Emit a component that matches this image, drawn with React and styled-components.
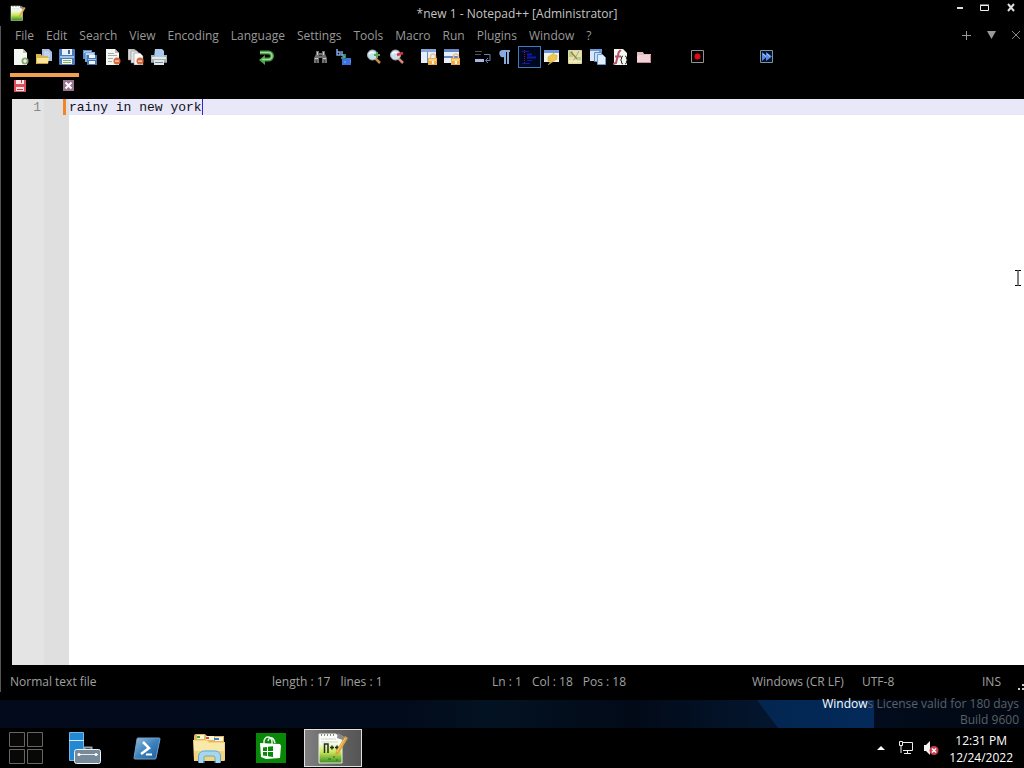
import React, { useState } from "react"
import styled, { createGlobalStyle } from "styled-components"

const menus = ["File", "Edit", "Search", "View", "Encoding", "Language", "Settings", "Tools", "Macro", "Run", "Plugins", "Window", "?"]

const toolGroups = [
    { gap: 0, tools: ["New", "Open", "Save", "Save All", "Close", "Close All", "Print"] },
    { gap: 84, tools: ["Redo"] },
    { gap: 31, tools: ["Find", "Replace"] },
    { gap: 8, tools: ["Zoom In", "Zoom Out"] },
    { gap: 9, tools: ["Sync Vertical", "Sync Horizontal"] },
    { gap: 8, tools: ["Word Wrap", "All Characters", "Indent Guide", "Define Language", "Document Map", "Document List", "Function List", "Folder"] },
    { gap: 30, tools: ["Record"] },
    { gap: 46, tools: ["Run Macro"] },
]

const page = <path d="M1 0h9l4 4v12H1z" fill="#f3f6f1" />
const lock = (
    <>
        <path d="M9.500 9V7.500a2.500 2.500 0 0 1 5 0V9" fill="none" stroke="#e9c48a" strokeWidth="1.500" />
        <rect x="7" y="9" width="9" height="7" fill="#f0ad50" />
        <path d="M8 10h7v2H8z" fill="#fbd28a" />
        <path d="M11 12h2v3h-2z" fill="#fff0c8" />
    </>
)
const minus = (
    <>
        <circle cx="12" cy="12" r="3.500" fill="#d8683a" />
        <path d="M10 11.500h4v1.200h-4z" fill="#ffe3d2" />
    </>
)

const drawings = {
    "New": (
        <>
            {page}
            <path d="M10 0l4 4h-4z" fill="#b9c4b6" />
            <circle cx="12" cy="12" r="3.500" fill="#8aa872" />
            <path d="M11.400 10h1.200v1.400H14v1.200h-1.400V14h-1.200v-1.400H10v-1.200h1.400z" fill="#fff" />
        </>
    ),
    "Open": (
        <>
            <path d="M6 0h7l3 3v9H6z" fill="#a9bfe4" />
            <path d="M8 3h5M8 5h6M8 7h6" stroke="#dbe5f6" />
            <path d="M0 5h5l1 2h6v8H0z" fill="#d9b650" />
            <path d="M1 9h12l-1 6H1z" fill="#f8e59a" />
            <path d="M1 14.500h11" stroke="#c79a32" />
        </>
    ),
    "Save": (
        <>
            <rect width="16" height="16" rx="1" fill="#4c7cc0" />
            <rect x="3" width="10" height="6" fill="#e9f1fa" />
            <rect x="9" y="1" width="2" height="4" fill="#47699c" />
            <path d="M1 7h14v2H1z" fill="#9fc0e8" />
            <rect x="3" y="10" width="10" height="5" fill="#f4f9f0" />
            <path d="M4 11.500h8M4 13.500h8" stroke="#83b56b" />
        </>
    ),
    "Save All": (
        <>
            <path d="M1 1h9v9H1z" fill="#5c8cc4" />
            <path d="M2 2h7v2H2z" fill="#a8c8ea" />
            <path d="M3 3h10v10H3z" fill="#7ba5d6" />
            <path d="M4 4h8v2H4z" fill="#bcd5ee" />
            <path d="M5 6h10v10H5z" fill="#4779b9" />
            <path d="M7 6h6v3H7zM7 12h6v3H7z" fill="#edf5fb" />
            <path d="M6 10h8v1H6z" fill="#9fc2e5" />
        </>
    ),
    "Close": (
        <>
            {page}
            <path d="M3 4.500h6M3 6.500h9M3 9.500h5M3 12.500h4" stroke="#a8abab" />
            <path d="M10 0l4 4h-4z" fill="#b9b9b9" />
            {minus}
        </>
    ),
    "Close All": (
        <>
            <path d="M0 0h6l3 2v9H0z" fill="#d6d6d6" stroke="#777" strokeWidth=".5" />
            <path d="M3 2h6l3 3v9H3z" fill="#e8e8e8" stroke="#777" strokeWidth=".5" />
            <path d="M6 4h6l3 3v9H6z" fill="#fafafa" stroke="#777" strokeWidth=".5" />
            {minus}
        </>
    ),
    "Print": (
        <>
            <path d="M4 0h7l2 2v6H3z" fill="#a9c9ea" />
            <path d="M0 6h3v2h10V6h3v8H0z" fill="#a7b0b5" />
            <path d="M1 8h14v2H1z" fill="#e2e7e9" />
            <path d="M3 11h10v5H3z" fill="#dce8ea" />
            <path d="M4 13.500h8M0 13.500h3M13 13.500h3" stroke="#78858b" />
        </>
    ),
    "Redo": (
        <>
            <path d="M2 3.500h8.500a3.500 3.500 0 0 1 0 7H6" fill="none" stroke="#3f9440" strokeWidth="4" />
            <path d="M7 6v10L1 11z" fill="#4da34b" />
            <path d="M2 3.500h8.500a3.500 3.500 0 0 1 0 7H4" fill="none" stroke="#a2dc94" strokeWidth="1.500" />
        </>
    ),
    "Find": (
        <>
            <path d="M4 2h3v2h3V2h3v3l2 4v5h-5V9H7v5H2V9l2-4z" fill="#707070" />
            <path d="M5 3h1v3H5zM11 3h1v3h-1zM3 9h3v1H3zM11 9h3v1h-3z" fill="#ccc" />
            <path d="M7 6h3v1H7z" fill="#333" />
            <path d="M4.500 11v3M12.500 11v3" stroke="#444" />
        </>
    ),
    "Replace": (
        <>
            <path d="M2 0v6h3V3H2M7 2v4h2" fill="none" stroke="#7ea8e0" strokeWidth="1.500" />
            <path d="M6 5l3 3M10 5v4H6" fill="none" stroke="#57a79c" strokeWidth="1.500" />
            <path d="M12 11H8v4h4zM12 9v6M16 10h-2v5h2" fill="#5f93ea" stroke="#3974dd" strokeWidth="2" />
        </>
    ),
    "Zoom In": (
        <>
            <path d="M9 9l5 5" stroke="#c98b4a" strokeWidth="2.500" />
            <circle cx="6.500" cy="6" r="5" fill="#c5e1e8" stroke="#9eb6c2" />
            <path d="M3 5q2-3 5-1" fill="none" stroke="#fff" strokeWidth="1.500" />
            <path d="M11 3v6M8 6h6" stroke="#5f9f56" strokeWidth="2" />
        </>
    ),
    "Zoom Out": (
        <>
            <path d="M9 9l5 5" stroke="#d78a72" strokeWidth="2.500" />
            <circle cx="6.500" cy="6" r="5" fill="#d3dfe8" stroke="#a5b3c2" />
            <path d="M3 5q2-3 5-1" fill="none" stroke="#fff" strokeWidth="1.500" />
            <path d="M8 6l6-2" stroke="#d6334a" strokeWidth="2.500" />
        </>
    ),
    "Sync Vertical": (
        <>
            <path d="M0 0h15v14H0z" fill="#e9effa" />
            <path d="M0 0h15v3H0z" fill="#87a5d8" />
            <path d="M6.500 3v11" stroke="#7189b5" />
            {lock}
        </>
    ),
    "Sync Horizontal": (
        <>
            <path d="M0 0h15v14H0z" fill="#e9effa" />
            <path d="M0 0h15v3H0zM0 7h15v2H0z" fill="#6788c2" />
            {lock}
        </>
    ),
    "Word Wrap": (
        <>
            <path d="M0 2.500h7M0 5.500h6" stroke="#51555c" />
            <path d="M0 10h9v3H0z" fill="#a8b5e8" />
            <path d="M9 5.500h6v6h-4M13 9l-2.500 2.500L13 14" fill="none" stroke="#6c83a8" />
        </>
    ),
    "All Characters": (
        <path d="M4 1h8v2h-1v12H9V3H8v12H6V8a3.500 3.500 0 0 1-2-7z" fill="#89abdc" />
    ),
    "Indent Guide": (
        <>
            <path d="M3.500 1v14" stroke="#8c1238" strokeDasharray="1 1" />
            <path d="M1 2.500h7M6 11.500h5M1 14.500h8" stroke="#1018a4" />
            <path d="M6 5.500h5M6 8.500h9" stroke="#1018b4" strokeWidth="2" />
        </>
    ),
    "Define Language": (
        <>
            <path d="M0 1h15v12H0z" fill="#f2f3e8" />
            <path d="M0 1h15v3H0z" fill="#6d98da" />
            <path d="M10 4L4 8v4h3l-3 4 9-6V6h-3z" fill="#eec84b" stroke="#d1a23a" strokeWidth=".5" />
        </>
    ),
    "Document Map": (
        <>
            <path d="M1.500 1.500h13v13h-13z" fill="#ecdfa0" stroke="#e2d8a5" />
            <path d="M2 2h4v6H2zM10 8h4v6h-4z" fill="#b5cf9b" />
            <path d="M12 2L8 9l-3 5" fill="none" stroke="#8cb0a6" />
            <path d="M4 3l6 7" stroke="#9a8550" strokeWidth="1.500" />
            <path d="M2 12.500h12" stroke="#f5f1c0" strokeWidth="2" />
        </>
    ),
    "Document List": (
        <>
            <path d="M0 0h12v3H0z" fill="#6d98d6" />
            <path d="M0 2h9v10H0z" fill="#d9e8f9" />
            <path d="M4.500 3.500h7v9h-7z" fill="#c8def4" stroke="#618fc4" />
            <path d="M7.500 5.500h5l3 3v7h-8z" fill="#e0edfb" stroke="#6d9bcb" />
        </>
    ),
    "Function List": (
        <>
            {page}
            <path d="M8 2q-2-1-3 4l-2 8-3 1M2 7.500h6" fill="none" stroke="#b85068" strokeWidth="2" />
            <path d="M10 7q-2 0-1.500 3l-1 1 1 1q-.5 3 1.500 3M12 7q2 0 1.500 3l1 1-1 1q.5 3-1.500 3" fill="none" stroke="#222" />
        </>
    ),
    "Folder": (
        <>
            <path d="M1 3h6l1 2h7v9H1z" fill="#e6bcc4" />
            <path d="M1 7l3-1h11v8H1z" fill="#f2d3d7" />
            <path d="M1 13.500h14M14.500 6v8" stroke="#c58d98" />
        </>
    ),
    "Record": (
        <>
            <path d="M2.500 1.500h12v12h-12z" fill="#080000" stroke="#929292" />
            <circle cx="8.500" cy="7.500" r="3" fill="#e00a16" />
        </>
    ),
    "Run Macro": (
        <>
            <path d="M2.500 1.500h12v12h-12z" fill="#03132e" stroke="#809698" />
            <path d="M4 3l5 4.500L4 12zM8 3l6 4.500L8 12z" fill="#5b87ea" />
            <path d="M5 5l3 2.500M9 5l3 2.500" stroke="#bed1ff" />
        </>
    ),
}

function ToolIcon({ name }) {
    return <svg width="16" height="16" viewBox="0 0 16 16" aria-hidden="true">{drawings[name]}</svg>
}

function NotepadIcon({ size }) {
    return (
        <svg width={size} height={size} viewBox="0 0 32 32" aria-hidden="true">
            <defs>
                <linearGradient id="sheet" x1="0" y1="0" x2="0" y2="1">
                    <stop offset="0.300" stopColor="#fafcf5" />
                    <stop offset="0.620" stopColor="#cbe75b" />
                    <stop offset="1" stopColor="#388d20" />
                </linearGradient>
            </defs>
            <path d="M2 2h17l6 5v24H2z" fill="url(#sheet)" stroke="#e6f1dc" />
            <path d="M4 3h15" stroke="#888" strokeWidth="2" strokeDasharray="1 2" />
            <path d="M4 7h15M4 10h17" stroke="#ced8cc" />
            {size > 16 && (
                <>
                    <path d="M7.500 21v-9h3.500v9M13 15.500h4M15 13.500v4M18 15.500h4M20 13.500v4" fill="none" stroke="#232d1b" strokeWidth="1.500" />
                    <path d="M11 27h3M16 25h2M19 28h2" stroke="#236d19" />
                </>
            )}
            <path d="M28 4l3 2-9 15-4 3 1-5z" fill="#dfa33d" />
            <path d="M28 6L20 20" stroke="#f5d070" />
            <path d="M21 1l7 4-2 3-6-2z" fill="#888" />
        </svg>
    )
}

function ServerIcon() {
    return (
        <svg width="34" height="34" viewBox="0 0 34 34">
            <path d="M1.500 1.500h14v28h-14z" fill="#2388d4" stroke="#77b7e7" />
            <path d="M1 9.500h15" stroke="#d4eaf8" />
            <path d="M16.500 19v-2.500h7V19" fill="none" stroke="#98a6b0" strokeWidth="2" />
            <rect x="6.500" y="18.500" width="26" height="14" rx="2" fill="#778a99" stroke="#eef2f4" />
            <path d="M10 23.500h20" stroke="#e5ebef" />
            <circle cx="11" cy="23.500" r="1.500" fill="#fff" />
            <circle cx="28" cy="23.500" r="1.500" fill="#fff" />
        </svg>
    )
}

function PowerShellIcon() {
    return (
        <svg width="30" height="26" viewBox="0 0 30 26">
            <defs>
                <linearGradient id="shell" x1="0" y1="0" x2="1" y2="1">
                    <stop offset="0" stopColor="#97bddb" />
                    <stop offset="0.500" stopColor="#3d82bd" />
                    <stop offset="1" stopColor="#1a5b9d" />
                </linearGradient>
            </defs>
            <path d="M6 3h21q1 0 1 1l-4 19q0 1-1 1H3q-1 0-1-1L5 4q0-1 1-1z" fill="url(#shell)" stroke="#6ea2d0" />
            <path d="M11 7l6 6L9 19" fill="none" stroke="#fff" strokeWidth="2.500" />
            <path d="M14 19.500h6" stroke="#fff" strokeWidth="2" />
        </svg>
    )
}

function ExplorerIcon() {
    return (
        <svg width="34" height="32" viewBox="0 0 34 32">
            <path d="M2 4q0-2 2-2h9l2 2h17v6H2z" fill="#e2b95e" />
            <path d="M5 3h7v4H5zM14 4h8v4h-8zM23 5h8v4h-8z" fill="#fff5d9" />
            <path d="M5 4h3v2H5z" fill="#42a64e" />
            <path d="M14 5h3v2h-3z" fill="#d7473b" />
            <path d="M22 6h5v2h-5z" fill="#3d7dd1" />
            <path d="M1 8h14l2 2h16v18q0 1-1 1H2z" fill="#f3d47d" />
            <path d="M2 9h13l2 2h15v8H2z" fill="#fae8a8" />
            <path d="M9 31v-6q0-4 4-4h9q4 0 4 4v6" fill="none" stroke="#a5d8ef" strokeWidth="5" />
            <path d="M6.500 30v-6q1-5 6-5h10q6 0 6 5v6" fill="none" stroke="#5babd3" />
            <path d="M12 31v-6q0-1 2-1h7q2 0 2 1v6" fill="none" stroke="#5babd3" />
        </svg>
    )
}

function StoreIcon() {
    return (
        <svg width="30" height="30" viewBox="0 0 30 30">
            <path d="M0 0h30v30H0z" fill="#098708" />
            <path d="M8 11V8q1-4 4-4t4 4v3M12 8q1-4 4-3 2 1 3 5" fill="none" stroke="#e8f5e8" strokeWidth="1.500" />
            <path d="M4 10l20 1 1 2-1 12-14 1-5-2z" fill="#fff" />
            <path d="M7 14.500l4-.5v4H7zM12 13.800l5-.6V18h-5zM7 19h4v4l-4-.5zM12 19h5v5l-5-.7z" fill="#098708" />
        </svg>
    )
}

function StartIcon() {
    return (
        <svg width="34" height="32" viewBox="0 0 34 32">
            <path d="M.5.500h15v14H.5zM18.500.500h15v14h-15zM.5 17.500h15v14H.5zM18.500 17.500h15v14h-15z" fill="#080808" stroke="#69665f" />
        </svg>
    )
}

const taskApps = [
    { name: "Server Manager", icon: <ServerIcon /> },
    { name: "Windows PowerShell", icon: <PowerShellIcon /> },
    { name: "File Explorer", icon: <ExplorerIcon /> },
    { name: "Store", icon: <StoreIcon /> },
    { name: "Notepad++", icon: <NotepadIcon size={32} />, active: true },
]

function App() {
    const [text, setText] = useState("rainy in new york")

    const displayMenus = menus.map((menu) => <MenuButton key={menu}>{menu}</MenuButton>)

    const displayGroups = toolGroups.map((group) => (
        <ToolGroup key={group.tools[0]} $gap={group.gap}>
            {group.tools.map((tool) => (
                <ToolButton key={tool} aria-label={tool} $active={tool === "Indent Guide"}>
                    <ToolIcon name={tool} />
                </ToolButton>
            ))}
        </ToolGroup>
    ))

    return (
        <Screen>
            <GlobalStyle />
            <EditorWindow>
                <TitleBar>
                    <NotepadIcon size={16} />
                    <Title>*new 1 - Notepad++ [Administrator]</Title>
                    <WindowControls>
                        <ControlButton aria-label="Minimize">
                            <svg width="10" height="10" viewBox="0 0 10 10"><path d="M1 4h6v2H1z" fill="#ddd" /></svg>
                        </ControlButton>
                        <ControlButton aria-label="Maximize">
                            <svg width="12" height="10" viewBox="0 0 12 10"><path d="M.5 2.500h8v5h-8zM0 2h9" fill="none" stroke="#eee" /></svg>
                        </ControlButton>
                        <ControlButton aria-label="Close window">
                            <svg width="10" height="10" viewBox="0 0 10 10"><path d="M2 1l6 7M8 1L2 8" stroke="#ddd" strokeWidth="2" /></svg>
                        </ControlButton>
                    </WindowControls>
                </TitleBar>

                <MenuBar>
                    {displayMenus}
                    <MenuTools>
                        <ControlButton aria-label="New tab">
                            <svg width="10" height="10" viewBox="0 0 10 10"><path d="M5.500 1v9M1 5.500h9" stroke="#999" /></svg>
                        </ControlButton>
                        <ControlButton aria-label="Tab list">
                            <svg width="10" height="10" viewBox="0 0 10 10"><path d="M1 1h9L5.500 9z" fill="#999" /></svg>
                        </ControlButton>
                        <ControlButton aria-label="Close tab">
                            <svg width="10" height="10" viewBox="0 0 10 10"><path d="M1 1l8 8M9 1L1 9" stroke="#888" /></svg>
                        </ControlButton>
                    </MenuTools>
                </MenuBar>

                <ToolBar>{displayGroups}</ToolBar>

                <TabBar>
                    <Tab>
                        <svg width="12" height="12" viewBox="0 0 12 12">
                            <path d="M0 0h12v12H0z" fill="#e0505a" />
                            <path d="M2 0h8v4H2zM2 7h8v4H2z" fill="#ffe8e8" />
                            <path d="M7 0h1v3H7zM3 9h6v1H3z" fill="#dc3545" />
                        </svg>
                        <TabClose aria-label="Close new 1">
                            <svg width="11" height="11" viewBox="0 0 11 11">
                                <path d="M0 0h11v11H0z" fill="#9a7590" />
                                <path d="M2.500 2.500l6 6M8.500 2.500l-6 6" stroke="#fff" strokeWidth="2" />
                            </svg>
                        </TabClose>
                    </Tab>
                </TabBar>

                <Editor>
                    <LineNumbers>1</LineNumbers>
                    <FoldMargin><ChangeMark /></FoldMargin>
                    <CodeArea>
                        <Code aria-label="new 1" spellCheck={false} value={text} onChange={(e) => setText(e.target.value)} />
                        <Caret style={{ left: `${text.length}ch` }} />
                    </CodeArea>
                </Editor>

                <StatusBar>
                    <StatusItem>Normal text file</StatusItem>
                    <StatusItem><span>length : 17</span><span>lines : 1</span></StatusItem>
                    <StatusItem><span>Ln : 1</span><span>Col : 18</span><span>Pos : 18</span></StatusItem>
                    <StatusItem>Windows (CR LF)</StatusItem>
                    <StatusItem>UTF-8</StatusItem>
                    <StatusItem>INS</StatusItem>
                    <Grip width="6" height="6" viewBox="0 0 6 6"><path d="M4 0h2v2H4zM0 4h2v2H0zM4 4h2v2H4z" fill="#ccc" /></Grip>
                </StatusBar>

                <Pointer width="8" height="16" viewBox="0 0 8 16">
                    <path d="M1 .5h2.500l.5.5.5-.5H7M4 1v14M1 15.500h2.500l.5-.5.5.5H7" fill="none" stroke="#000" />
                </Pointer>
            </EditorWindow>

            <Desktop>
                <Watermark><b>Window</b>s License valid for 180 days</Watermark>
                <Watermark>Build 9600</Watermark>
            </Desktop>

            <TaskBar>
                <StartButton aria-label="Start"><StartIcon /></StartButton>
                {taskApps.map((app) => (
                    <TaskButton key={app.name} aria-label={app.name} $active={app.active}>{app.icon}</TaskButton>
                ))}
                <Tray>
                    <TrayButton aria-label="Show hidden icons">
                        <svg width="8" height="4" viewBox="0 0 8 4"><path d="M0 4l4-4 4 4z" fill="#fff" /></svg>
                    </TrayButton>
                    <TrayButton aria-label="Network">
                        <svg width="16" height="16" viewBox="0 0 16 16">
                            <path d="M5 2.500h9.500v8H5M9.500 11v3M6 13.500h7" fill="none" stroke="#eee" />
                            <path d="M1.500 1.500h3v4h-3zM3 6v7" fill="#000" stroke="#eee" />
                        </svg>
                    </TrayButton>
                    <TrayButton aria-label="Volume muted">
                        <svg width="16" height="16" viewBox="0 0 16 16">
                            <path d="M1 5h2l4-4v14l-4-4H1z" fill="#f2f2f2" />
                            <circle cx="11" cy="10.500" r="4.500" fill="#c8404c" />
                            <path d="M9 8.500l4 4M13 8.500l-4 4" stroke="#fff" strokeWidth="1.500" />
                        </svg>
                    </TrayButton>
                    <Clock><span>12:31 PM</span><span>12/24/2022</span></Clock>
                </Tray>
            </TaskBar>
        </Screen>
    )
}

const GlobalStyle = createGlobalStyle`
    * {
        box-sizing: border-box;
    }

    body {
        margin: 0;
        background: #000;
        font-family: "Open Sans", "Noto Sans", sans-serif;
        font-size: 12px;
    }

    button {
        display: flex;
        align-items: center;
        justify-content: center;
        padding: 0;
        border: none;
        background: none;
        color: inherit;
        font: inherit;
    }
`

const Screen = styled.div`
    display: flex;
    flex-direction: column;
    min-height: 100vh;
`

const EditorWindow = styled.main`
    position: relative;
    display: flex;
    flex: 1;
    flex-direction: column;
    background: #000;
    color: #a0a0a0;

    &::before {
        content: "";
        position: absolute;
        top: 26px;
        bottom: 8px;
        left: 0;
        width: 1px;
        background: #555;
    }
`

const TitleBar = styled.header`
    display: grid;
    grid-template-columns: 1fr auto 1fr;
    align-items: center;
    height: 26px;
    padding-left: 10px;
`

const Title = styled.h1`
    margin: 0;
    color: #c4c4c4;
    font-size: 12px;
    font-weight: 400;
`

const WindowControls = styled.div`
    display: flex;
    gap: 13px;
    justify-content: flex-end;
    padding: 0 7px 10px 0;
`

const ControlButton = styled.button`
    width: 12px;
    height: 12px;
`

const MenuBar = styled.nav`
    display: flex;
    gap: 12px;
    align-items: center;
    height: 18px;
    padding-left: 15px;
`

const MenuButton = styled.button`
    color: #999;
`

const MenuTools = styled.div`
    display: flex;
    gap: 13px;
    margin-left: auto;
    padding-right: 2px;
`

const ToolBar = styled.div`
    display: flex;
    align-items: center;
    height: 29px;
    padding: 0 0 3px 10px;
`

const ToolGroup = styled.div`
    display: flex;
    margin-left: ${(props) => props.$gap}px;
`

const ToolButton = styled.button`
    width: 23px;
    height: 22px;

    && {
        justify-content: flex-start;
        padding-left: ${(props) => (props.$active ? "2px" : "3px")};
        border: ${(props) => (props.$active ? "1px solid #3f7cb8" : "none")};
        background: ${(props) => (props.$active ? "#000820" : "none")};
    }
`

const TabBar = styled.div`
    display: flex;
    height: 26px;
    padding-left: 10px;
`

const Tab = styled.div`
    display: flex;
    align-items: center;
    justify-content: space-between;
    width: 69px;
    padding: 0 5px 5px 4px;
    border-top: 4px solid #f0a050;
`

const TabClose = styled.button`
    width: 11px;
    height: 11px;
`

const Editor = styled.section`
    display: flex;
    flex: 1;
    margin-left: 12px;
    background: #fff;
    font-family: "Liberation Mono", monospace;
    font-size: 13px;
    line-height: 16px;
`

const LineNumbers = styled.div`
    width: 32px;
    padding: 1px 3px 0 0;
    background: #e4e4e4;
    color: #888;
    text-align: right;
`

const FoldMargin = styled.div`
    display: flex;
    justify-content: flex-end;
    width: 25px;
    padding-right: 3px;
    background: #dfdfdf;
`

const ChangeMark = styled.div`
    width: 3px;
    height: 16px;
    background: #f28424;
`

const CodeArea = styled.div`
    position: relative;
    display: flex;
    flex: 1;
`

const Code = styled.textarea`
    flex: 1;
    padding: 1px 0 0;
    border: none;
    outline: none;
    resize: none;
    background: linear-gradient(#e8e8f8 16px, #fff 16px);
    color: #101020;
    font: inherit;
`

const Caret = styled.span`
    position: absolute;
    top: 0;
    width: 1px;
    height: 16px;
    background: #4020c0;
`

const StatusBar = styled.footer`
    position: relative;
    display: grid;
    grid-template-columns: 1fr 220px 260px 110px 120px 42px;
    align-items: center;
    height: 35px;
    padding: 0 0 2px 10px;
`

const StatusItem = styled.div`
    display: flex;
    gap: 10px;
    white-space: nowrap;
`

const Grip = styled.svg`
    position: absolute;
    right: 0;
    bottom: 10px;
`

const Pointer = styled.svg`
    position: absolute;
    top: 270px;
    right: 2px;
`

const Desktop = styled.section`
    position: relative;
    display: flex;
    flex-direction: column;
    align-items: flex-end;
    justify-content: flex-end;
    height: 28px;
    padding-right: 5px;
    background: linear-gradient(90deg, #020a1c, #020b1b 40%, #031222 48%, #020a18 62%, #03162e 75%, #020c1c 86%, #010710);

    &::before {
        content: "";
        position: absolute;
        top: 0;
        right: 150px;
        width: 117px;
        height: 28px;
        background: linear-gradient(90deg, #032650, #032a5a);
        clip-path: polygon(0 0, 100% 0, 100% 100%, 18% 100%);
    }
`

const Watermark = styled.div`
    position: relative;
    color: #5c6066;
    line-height: 16px;

    b {
        color: #fff;
        font-weight: 400;
    }
`

const TaskBar = styled.footer`
    display: flex;
    gap: 4px;
    align-items: center;
    height: 40px;
    background: #000;
`

const StartButton = styled.button`
    width: 52px;
    height: 38px;
`

const TaskButton = styled.button`
    width: 58px;
    height: 38px;

    && {
        border: ${(props) => (props.$active ? "1px solid #e0e0e0" : "none")};
        background: ${(props) => (props.$active ? "linear-gradient(90deg, #808080, #666 50%, #555)" : "none")};
    }
`

const Tray = styled.div`
    display: flex;
    gap: 9px;
    align-items: center;
    margin-left: auto;
    padding-right: 11px;
    color: #fff;
`

const TrayButton = styled.button`
    width: 16px;
    height: 16px;
`

const Clock = styled.time`
    display: flex;
    flex-direction: column;
    align-items: center;
    padding: 2px 0 0 1px;
    line-height: 17px;
`

export default App
